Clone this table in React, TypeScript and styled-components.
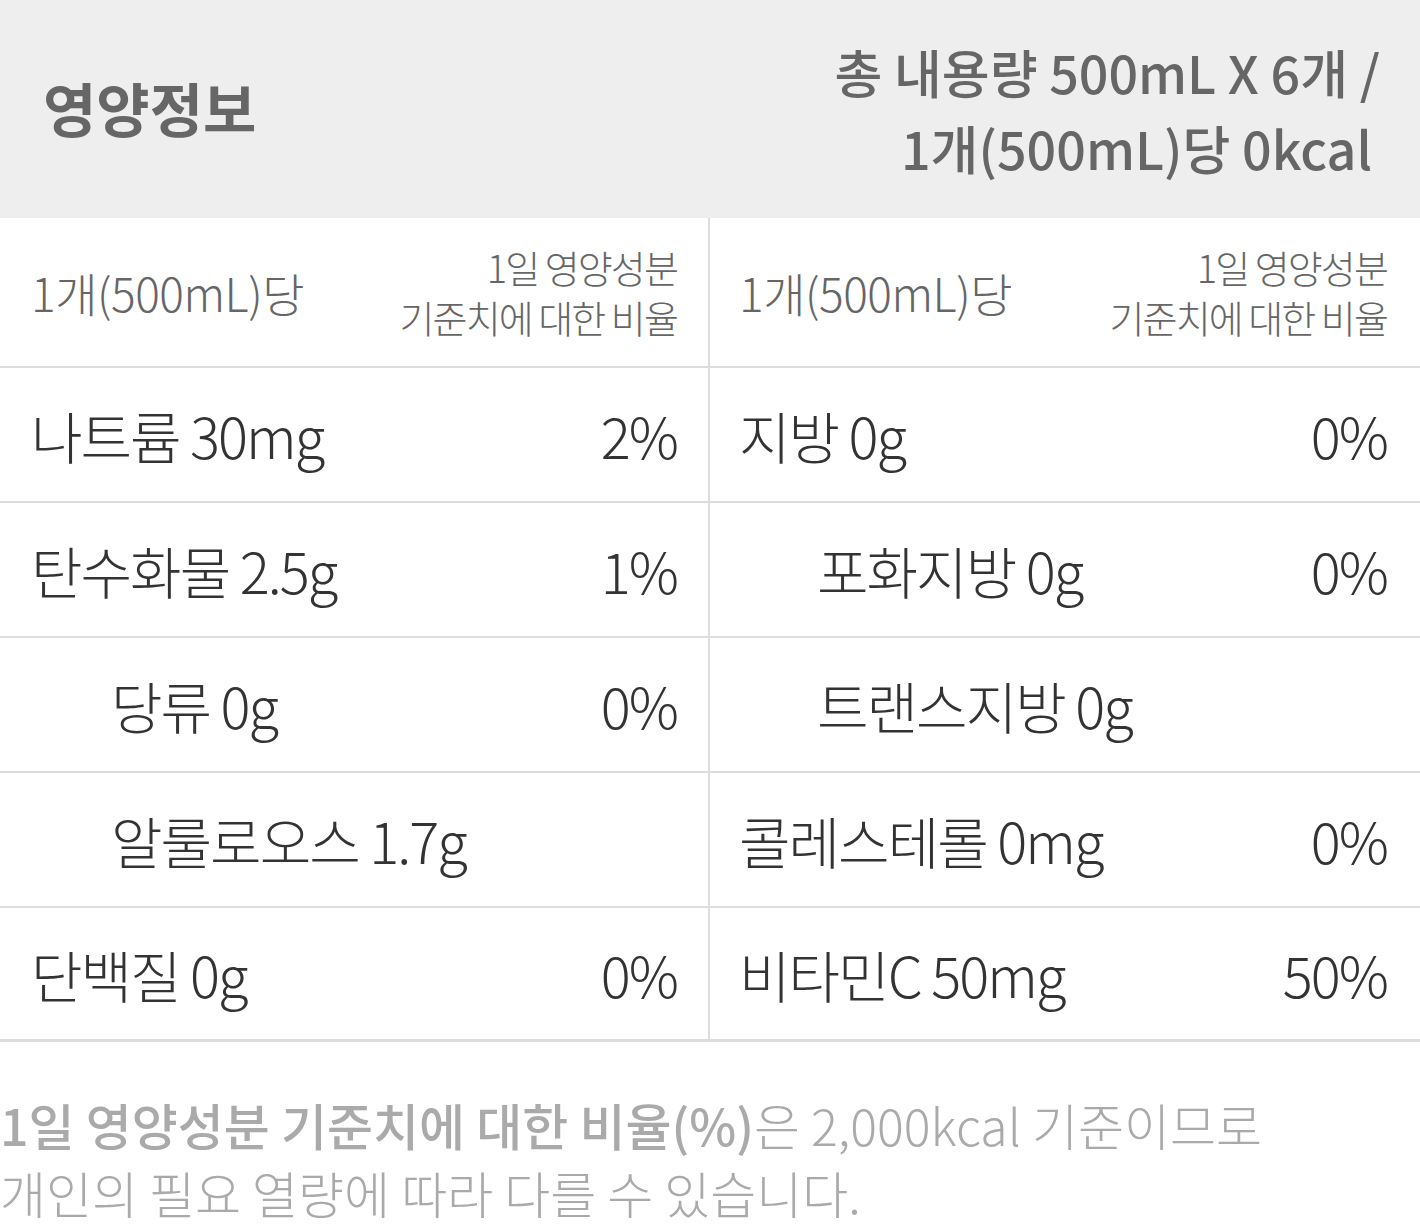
import styled, { createGlobalStyle } from "styled-components";

const GlobalStyle = createGlobalStyle`
    body {
        margin: 0;
        background: #ffffff;
        font-family: "Noto Sans CJK KR", "Noto Sans", sans-serif;
    }
`;

const Page = styled.div`
    width: 1420px;
    display: flex;
    flex-direction: column;
`;

const Header = styled.div`
    height: 218px;
    background: #eeeeee;
    display: flex;
    align-items: center;
    justify-content: space-between;
    padding: 0 40px 0 43px;
    box-sizing: border-box;
    color: #666666;
`;

const Title = styled.h1`
    margin: 0 0 4px;
    font-size: 58px;
    font-weight: 700;
`;

const Summary = styled.div`
    text-align: right;
    font-size: 52px;
    font-weight: 500;
    line-height: 76px;
    padding-top: 2px;
`;

const SummaryLine = styled.span<{ inset?: boolean }>`
    display: block;
    margin-right: ${({ inset }) => (inset ? "8px" : "0")};
`;

const Grid = styled.div`
    display: grid;
    grid-template-columns: 710px 710px;
    border-bottom: 3px solid #dddddd;
`;

const Cell = styled.div<{ side: "left" | "right"; head?: boolean; indent?: boolean }>`
    height: ${({ head }) => (head ? "150px" : "135px")};
    box-sizing: border-box;
    display: flex;
    align-items: center;
    justify-content: space-between;
    border-bottom: 2px solid #dddddd;
    border-right: ${({ side }) => (side === "left" ? "2px solid #dddddd" : "none")};
    padding: ${({ side, indent }) =>
        side === "left"
            ? `0 31px 0 ${indent ? 111 : 31}px`
            : `0 33px 0 ${indent ? 107 : 29}px`};
    &:nth-last-child(-n + 2) {
        height: 131px;
        border-bottom: none;
    }
`;

const HeadLabel = styled.span`
    font-size: 46px;
    font-weight: 300;
    color: #666666;
    letter-spacing: -0.01em;
`;

const HeadRatio = styled.span`
    font-size: 38px;
    font-weight: 300;
    color: #666666;
    line-height: 50px;
    text-align: right;
    letter-spacing: -0.05em;
`;

const Nutrient = styled.span`
    font-size: 56px;
    font-weight: 300;
    color: #333333;
    letter-spacing: -0.035em;
`;

const Percent = styled(Nutrient)``;

const Footer = styled.div`
    padding-top: 48px;
    font-size: 50px;
    font-weight: 300;
    line-height: 68px;
    color: #aaaaaa;
`;

const Strong = styled.b`
    font-weight: 500;
`;

type Item = { label: string; value?: string; indent?: boolean };

const rows: [Item, Item][] = [
    [{ label: "나트륨 30mg", value: "2%" }, { label: "지방 0g", value: "0%" }],
    [{ label: "탄수화물 2.5g", value: "1%" }, { label: "포화지방 0g", value: "0%", indent: true }],
    [{ label: "당류 0g", value: "0%", indent: true }, { label: "트랜스지방 0g", indent: true }],
    [{ label: "알룰로오스 1.7g", indent: true }, { label: "콜레스테롤 0mg", value: "0%" }],
    [{ label: "단백질 0g", value: "0%" }, { label: "비타민C 50mg", value: "50%" }]
];

export default function App() {
    return (
        <Page>
            <GlobalStyle />
            <Header>
                <Title>영양정보</Title>
                <Summary>
                    <SummaryLine>총 내용량 500mL X 6개 /</SummaryLine>
                    <SummaryLine inset>1개(500mL)당 0kcal</SummaryLine>
                </Summary>
            </Header>
            <Grid>
                {(["left", "right"] as const).map((side) => (
                    <Cell key={side} side={side} head>
                        <HeadLabel>1개(500mL)당</HeadLabel>
                        <HeadRatio>
                            1일 영양성분
                            <br />
                            기준치에 대한 비율
                        </HeadRatio>
                    </Cell>
                ))}
                {rows.flatMap((pair, i) =>
                    pair.map((item, j) => (
                        <Cell key={`${i}-${j}`} side={j === 0 ? "left" : "right"} indent={item.indent}>
                            <Nutrient>{item.label}</Nutrient>
                            {item.value && <Percent>{item.value}</Percent>}
                        </Cell>
                    ))
                )}
            </Grid>
            <Footer>
                <Strong>1일 영양성분 기준치에 대한 비율(%)</Strong>은 2,000kcal 기준이므로
                <br />
                개인의 필요 열량에 따라 다를 수 있습니다.
            </Footer>
        </Page>
    );
}
